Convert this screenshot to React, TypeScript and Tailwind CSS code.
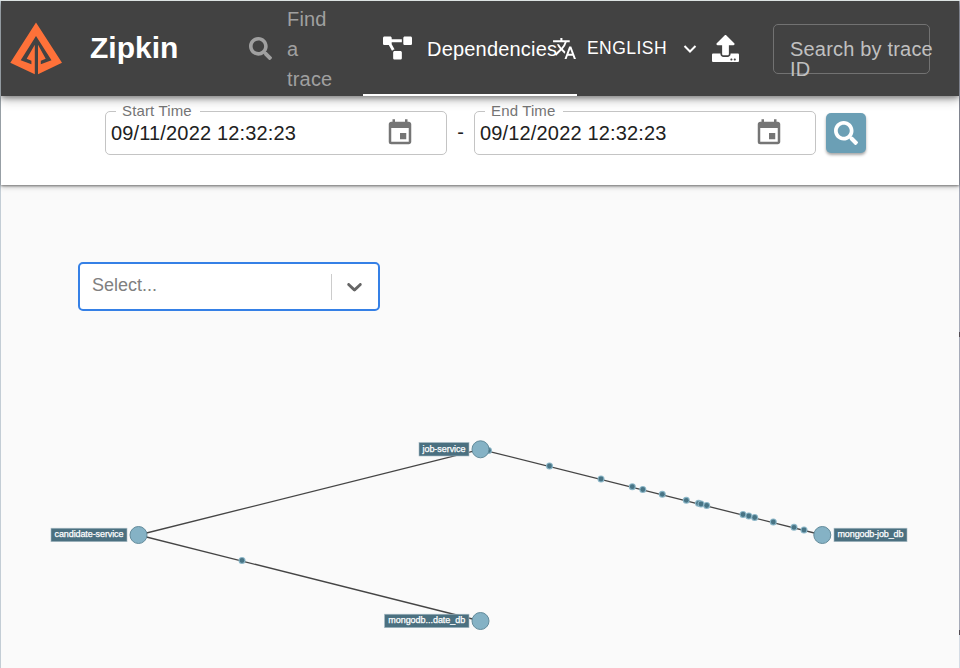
import React from "react";
import { FaSearch, FaProjectDiagram, FaUpload } from "react-icons/fa";
import { MdEvent, MdTranslate } from "react-icons/md";

const callDots: [number, number][] = [
  [242, 560.5],
  [488.5, 450.5],
  [549.5, 466],
  [601, 479],
  [632.3, 486.7],
  [642.8, 489.5],
  [662.3, 494.3],
  [686.3, 500.3],
  [698.5, 503.3],
  [701, 504],
  [706.7, 505.5],
  [743, 514.5],
  [748.8, 516],
  [754.7, 517.5],
  [773.3, 522],
  [794, 527.3],
  [804, 530],
];

const services = [
  { name: "candidate-service", cx: 138.5, cy: 535, x: 51, w: 76, textWidth: 69 },
  { name: "job-service", cx: 480.5, cy: 449.3, x: 419, w: 50, textWidth: 43 },
  { name: "mongodb...date_db", cx: 480.5, cy: 621, x: 384.5, w: 84.5, textWidth: 77 },
  { name: "mongodb-job_db", cx: 822.3, cy: 535, x: 834, w: 73, textWidth: 66 },
];

function ZipkinLogo() {
  return (
    <svg className="ml-[9px] h-[53px] w-[53px] shrink-0" viewBox="0 0 53 53">
      <path
        fill="#fe7139"
        d="M26 0.5 L52 40.8 L28 52.3 V22.8 L35.7 36.8 L30.8 38.8 V42.2 L41.5 38.3 L26 14 L10.7 38.3 L21.4 42.2 V38.8 L16.7 36.8 L24.8 22.8 V52.3 L0.3 40.8 Z"
      />
    </svg>
  );
}

function Header() {
  return (
    <header className="relative z-20 flex h-[95px] shrink-0 items-center bg-[#424242] text-white shadow-[0_2px_5px_rgba(0,0,0,0.35),0_4px_10px_rgba(0,0,0,0.25)]">
      <ZipkinLogo />
      <h1 className="-mt-[2px] ml-[27px] w-[159px] shrink-0 text-[30px] leading-[40px] font-bold">Zipkin</h1>
      <div className="flex w-[114px] shrink-0 items-center text-[#a0a0a0]">
        <FaSearch className="h-[23px] w-[23px]" />
        <span className="ml-[15px] w-[46px] text-[20px] leading-[30px] tracking-[0.19px]">Find a trace</span>
      </div>
      <div className="flex h-full w-[214px] shrink-0 items-center border-b-2 border-white pl-[20px]">
        <FaProjectDiagram className="mt-px h-[24px] w-[29px] shrink-0" />
        <span className="ml-[15px] pt-[2px] text-[20px] leading-[30px] tracking-[0.19px]">Dependencies</span>
      </div>
      <div className="-ml-[25px] flex shrink-0 items-center">
        <MdTranslate className="h-[25px] w-[25px]" />
        <span className="-mt-[2px] ml-[10px] text-[17.5px] leading-[30px] tracking-[0.45px]">ENGLISH</span>
        <svg className="ml-[16px] h-[14px] w-[14px]" viewBox="0 0 14 14">
          <path d="M1.5 4 L7 9.5 L12.5 4" fill="none" stroke="white" strokeWidth="2" />
        </svg>
      </div>
      <FaUpload className="ml-[15px] h-[27px] w-[27px] shrink-0" />
      <div className="mt-px ml-[34px] h-[50px] w-[157px] shrink-0 rounded-[5px] border border-[#727272] pt-[14px] pl-[16px] text-[20px] leading-[20px] tracking-[0.19px] text-[#c0c0c0]">
        <div className="w-[150px]">Search by trace ID</div>
      </div>
    </header>
  );
}

function DateField({ label, value }: { label: string; value: string }) {
  return (
    <fieldset className="relative flex h-[44px] w-[342px] shrink-0 items-center rounded-[5px] border border-[#c4c4c4] pl-[5px]">
      <span className="absolute -top-[11px] left-[10px] bg-white pr-[8px] pl-[6px] text-[15px] leading-[20px] tracking-[0.14px] text-[#757575]">
        {label}
      </span>
      <span className="w-[274px] text-[20px] leading-[24px] tracking-[0.16px] text-[#212121]">{value}</span>
      <MdEvent className="h-[30px] w-[30px] text-[#757575]" />
    </fieldset>
  );
}

function FilterBar() {
  return (
    <section className="relative z-10 flex h-[89px] shrink-0 items-start bg-white pt-[15px] pl-[104px] shadow-[0_1px_2px_rgba(0,0,0,0.4),0_2px_5px_rgba(0,0,0,0.25)]">
      <DateField label="Start Time" value="09/11/2022 12:32:23" />
      <span className="w-[27px] pt-[6px] text-center text-[20px] leading-[30px] text-[#212121]">-</span>
      <DateField label="End Time" value="09/12/2022 12:32:23" />
      <button className="mt-[2px] ml-[10px] flex h-[40px] w-[40px] items-center justify-center rounded-[5px] bg-[#6b9fb5] text-white shadow-[0_2px_3px_rgba(0,0,0,0.35)]">
        <FaSearch className="h-[24px] w-[24px]" />
      </button>
    </section>
  );
}

function ServiceSelect() {
  return (
    <div className="mt-[77px] ml-[77px] flex h-[49px] w-[302px] items-center rounded-[5px] border-2 border-[#3580e6] bg-white">
      <span className="-mt-[4px] w-[251px] pl-[12px] text-[18px] leading-[24px] text-[#808080]">Select...</span>
      <span className="h-[26px] w-px bg-[#cccccc]" />
      <svg className="ml-[10px] h-[25px] w-[25px]" viewBox="0 0 20 20" fill="#666666">
        <path d="M4.516 7.548c0.436-0.446 1.043-0.481 1.576 0l3.908 3.747 3.908-3.747c0.533-0.481 1.141-0.446 1.574 0 0.436 0.445 0.408 1.197 0 1.615-0.406 0.418-4.695 4.502-4.695 4.502-0.217 0.223-0.502 0.335-0.787 0.335s-0.57-0.112-0.789-0.335c0 0-4.287-4.084-4.695-4.502s-0.436-1.17 0-1.615z" />
      </svg>
    </div>
  );
}

function DependencyGraph() {
  return (
    <svg className="block h-[357px] w-[958px] shrink-0" viewBox="1 311 958 357">
      <g stroke="#454545" strokeWidth="1.3">
        <line x1="138.5" y1="535" x2="480.5" y2="449.3" />
        <line x1="138.5" y1="535" x2="480.5" y2="621" />
        <line x1="480.5" y1="449.3" x2="822.3" y2="535" />
      </g>
      {callDots.map(([x, y]) => (
        <g key={x}>
          <circle cx={x} cy={y} r="3.5" fill="#8ab5c6" />
          <circle cx={x} cy={y} r="2.4" fill="#487485" />
        </g>
      ))}
      {services.map((s) => (
        <g key={s.name}>
          <circle cx={s.cx} cy={s.cy} r="8.5" fill="#85b2c5" stroke="#638b9b" strokeWidth="1" />
          <rect x={s.x} y={s.cy - 6.8} width={s.w} height="13.5" fill="#4b7080" stroke="#a9bdc5" strokeWidth="0.6" />
          <text
            x={s.x + s.w / 2}
            y={s.cy + 2.4}
            textAnchor="middle"
            textLength={s.textWidth}
            className="fill-white stroke-white text-[9px] [stroke-width:0.25px]"
          >
            {s.name}
          </text>
        </g>
      ))}
    </svg>
  );
}

export default function App() {
  return (
    <div className="flex h-[668px] w-[960px] overflow-hidden border-t border-t-[#dce3e2] bg-[#fafafa] font-['Liberation_Sans',Arial,sans-serif]">
      <div className="w-px shrink-0 bg-[#c3cdd5]" />
      <main className="flex w-[958px] shrink-0 flex-col">
        <Header />
        <FilterBar />
        <ServiceSelect />
        <DependencyGraph />
      </main>
      <div className="flex w-px shrink-0 flex-col bg-[#a6abb9]">
        <div className="mt-[331px] h-[5px] bg-[#514b53]" />
        <div className="mt-[293px] h-[5px] bg-[#514b53]" />
        <div className="grow bg-[#d5dce5]" />
      </div>
    </div>
  );
}
